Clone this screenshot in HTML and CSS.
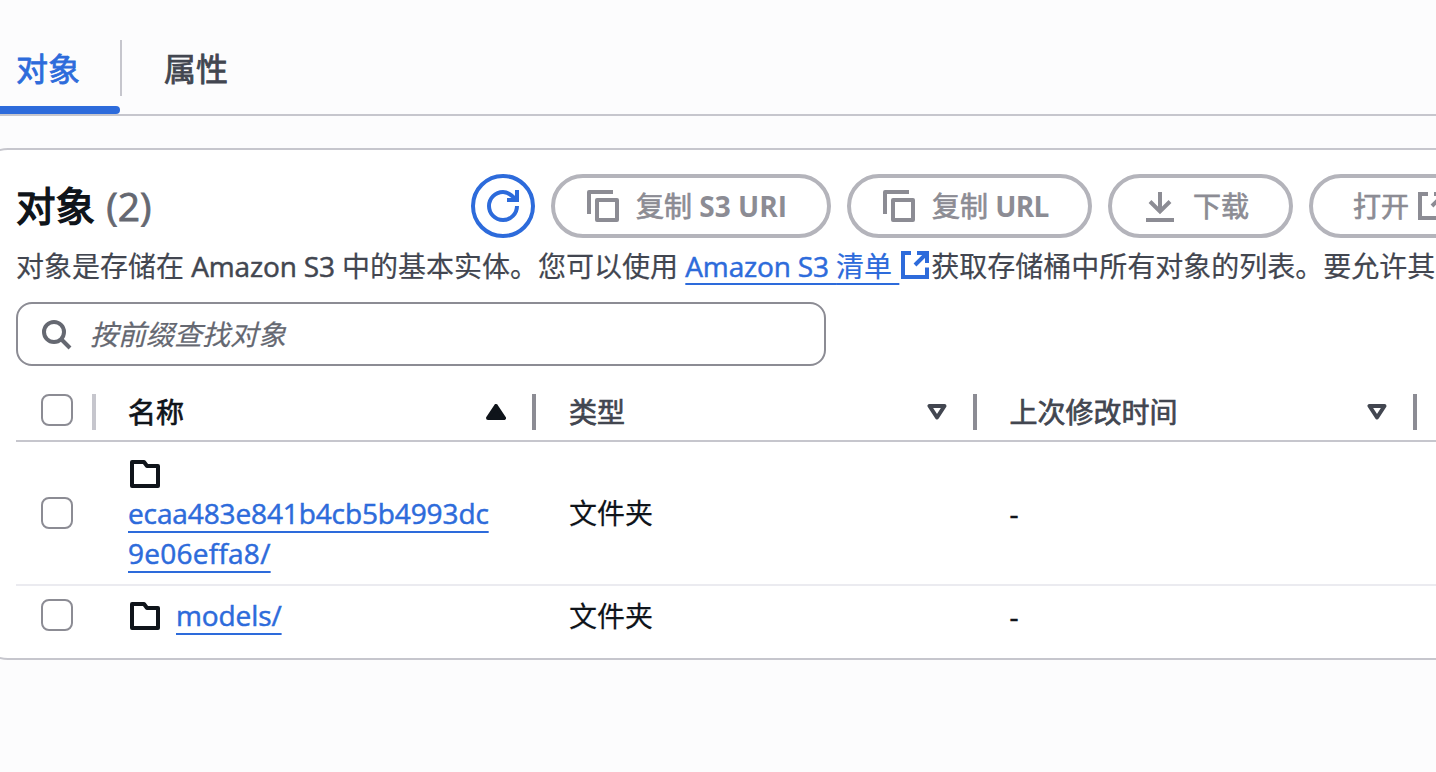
FILE: index.html
```html
<!DOCTYPE html>
<html lang="zh-CN">
<head>
<meta charset="utf-8">
<title>对象</title>
<link rel="stylesheet" href="styles.css">
</head>
<body>
<svg class="defs" width="0" height="0" aria-hidden="true">
  <symbol id="copy" viewBox="0 0 32 32"><path d="M2 24V2H26"/><rect x="10" y="10" width="20" height="20"/></symbol>
  <symbol id="refresh" viewBox="0 0 32 32"><path d="M30 16A14 14 0 1 1 16 2C21 2 24.500 4.500 28.500 9.500M20 10H30V0"/></symbol>
  <symbol id="download" viewBox="0 0 32 32"><path d="M16 2V21M6 11.500L16 21.500L26 11.500M2 30H30"/></symbol>
  <symbol id="external" viewBox="0 0 28 28"><path d="M10 2H2V26H26V16.500M16 2H26V12M26 2L14 14"/></symbol>
  <symbol id="search" viewBox="0 0 30 30"><circle cx="12" cy="12" r="10"/><path d="M19 19L28 28"/></symbol>
  <symbol id="folder" viewBox="0 0 30 28"><path d="M2 2H14L17 6H28V26H2Z"/></symbol>
  <symbol id="sort-up" viewBox="0 0 20 16"><path fill="currentColor" d="M10 2L18 14H2Z"/></symbol>
  <symbol id="sort-down" viewBox="0 0 20 16"><path d="M2.500 2H17.500L10 13.500Z"/></symbol>
</svg>

<nav class="tabs">
  <a class="tab tab-active">对象</a>
  <a class="tab">属性</a>
</nav>

<main class="panel">
  <header class="panel-header">
    <h1 class="title">对象 <span class="count">(2)</span></h1>
    <div class="actions">
      <button class="btn btn-round"><svg class="icon32"><use href="#refresh"/></svg></button>
      <button class="btn btn-off btn-uri"><svg class="icon32"><use href="#copy"/></svg><span>复制 <b>S3 URI</b></span></button>
      <button class="btn btn-off btn-url"><svg class="icon32"><use href="#copy"/></svg><span>复制 <b>URL</b></span></button>
      <button class="btn btn-off btn-download"><svg class="icon32"><use href="#download"/></svg><span>下载</span></button>
      <button class="btn btn-off btn-open"><span>打开</span><svg class="icon28"><use href="#external"/></svg></button>
    </div>
  </header>
  <p class="description">对象是存储在 <span class="latin">Amazon S3 </span>中的基本实体。您可以使用 <a class="link"><span class="latin">Amazon S3 </span>清单 </a><svg class="icon28 desc-icon"><use href="#external"/></svg>获取存储桶中所有对象的列表。要允许其</p>

  <div class="search">
    <svg class="icon30"><use href="#search"/></svg>
    <span class="placeholder">按前缀查找对象</span>
  </div>

  <section class="table">
    <div class="row head">
      <div class="cell check"><i class="box"></i></div>
      <div class="cell sorted">名称<svg class="sort"><use href="#sort-up"/></svg></div>
      <div class="cell">类型<svg class="sort"><use href="#sort-down"/></svg></div>
      <div class="cell">上次修改时间<svg class="sort"><use href="#sort-down"/></svg></div>
    </div>
    <div class="row tall">
      <div class="cell check"><i class="box"></i></div>
      <div class="cell stacked">
        <span class="folder-line"><svg class="folder"><use href="#folder"/></svg></span>
        <a class="link hash">ecaa483e841b4cb5b4993dc</a>
        <a class="link hash-end">9e06effa8/</a>
      </div>
      <div class="cell">文件夹</div>
      <div class="cell dash">-</div>
    </div>
    <div class="row short">
      <div class="cell check"><i class="box"></i></div>
      <div class="cell"><svg class="folder"><use href="#folder"/></svg><a class="link models">models/</a></div>
      <div class="cell">文件夹</div>
      <div class="cell dash">-</div>
    </div>
  </section>
</main>
</body>
</html>
```
FILE: styles.css
```css
* { box-sizing: border-box; }

body {
  margin: 0;
  width: 1436px;
  height: 772px;
  overflow: hidden;
  background: #fcfcfd;
  color: #0f141a;
  font: 28px/40px "Open Sans", "Noto Sans CJK SC", sans-serif;
  -webkit-text-stroke: 0.2px;
}

svg {
  display: block;
  flex: none;
  fill: none;
  stroke: currentColor;
  stroke-width: 4;
}
.defs { position: absolute; }
.icon32 { width: 32px; height: 32px; }
.icon30 { width: 30px; height: 30px; }
.icon28 { width: 28px; height: 28px; }
#copy, #folder, #sort-up, #sort-down { stroke-linejoin: round; }

.tabs {
  display: flex;
  height: 116px;
  padding-top: 40px;
  border-bottom: 2px solid #c6c6cd;
}
.tab {
  display: flex;
  flex-direction: column;
  justify-content: space-between;
  height: 74px;
  padding-left: 44px;
  color: #424650;
  font-size: 32px;
  line-height: 57px;
  -webkit-text-stroke: 0.8px;
}
.tab-active {
  width: 120px;
  padding-left: 16px;
  color: #2d6bdb;
}
.tab-active::after {
  content: "";
  width: 120px;
  height: 8px;
  margin-left: -16px;
  border-radius: 0 4px 4px 0;
  background: #2d6bdb;
}
.tab + .tab {
  height: 56px;
  padding-left: 42px;
  border-left: 2px solid #c6c6cd;
}

/* The left corners sit outside the viewport; the right side runs to its edge. */
.panel {
  width: 1460px;
  height: 512px;
  margin: 32px 0 0 -24px;
  padding: 24px 0 0 40px;
  border: 2px solid #c6c6cd;
  border-width: 2px 0;
  border-radius: 32px 0 0 32px;
  background: #fff;
  overflow: hidden;
}
.panel-header {
  display: flex;
  height: 64px;
}
.title {
  flex: none;
  width: 455px;
  margin: 0;
  font-size: 39.5px;
  font-weight: 400;
  line-height: 63px;
  -webkit-text-stroke: 1.4px;
}
.count {
  margin-left: 1px;
  color: #656871;
  font-size: 39px;
  -webkit-text-stroke: 0.8px;
}
.actions {
  display: flex;
  gap: 16px;
}
.btn {
  display: flex;
  flex: none;
  align-items: center;
  gap: 17px;
  height: 64px;
  padding: 0 0 0 32px;
  border: 4px solid #2d6bdb;
  border-radius: 32px;
  background: #fff;
  color: #2d6bdb;
  font: inherit;
  white-space: nowrap;
  -webkit-text-stroke: 0.7px;
}
.btn b { -webkit-text-stroke: 0; }
.btn-round { width: 64px; padding: 0 12px; }
.btn-off { border-color: #b4b4bb; color: #8c8c94; }
.btn-uri { width: 280px; }
.btn-url { width: 245px; }
.btn-url b { letter-spacing: -0.7px; }
.btn-download { width: 185px; }
.btn-open { width: 200px; padding-left: 40px; gap: 9px; }

.description {
  display: flex;
  height: 40px;
  margin: 8px 0 0;
  color: #424650;
  white-space: pre;
}
.desc-icon { margin: 5px 2px 0; color: #2d6bdb; }
.latin { letter-spacing: -0.15px; -webkit-text-stroke: 0.5px; }
.link {
  color: #2d6bdb;
  text-decoration: underline 2px;
  text-underline-offset: 6px;
  text-decoration-skip-ink: none;
}

.search {
  display: flex;
  align-items: center;
  gap: 18px;
  width: 810px;
  height: 64px;
  margin-top: 16px;
  padding-left: 24px;
  border: 2px solid #8c8c94;
  border-radius: 16px;
  color: #656871;
}
.search .icon30 { margin-top: 1px; }
.placeholder { font-style: italic; }

.table { margin-top: 16px; }
.row {
  display: grid;
  grid-template-columns: 80px 440px 440.5px 440px;
  border-bottom: 2px solid #ebebf0;
}
.cell {
  display: flex;
  align-items: center;
  padding-left: 33px;
}
.cell:nth-child(2) { padding-left: 32px; }
.check.cell { padding-left: 25px; }
.box {
  width: 32px;
  height: 32px;
  border: 2px solid #8c8c94;
  border-radius: 8px;
}
.head {
  height: 60px;
  border-color: #c6c6cd;
  color: #424650;
}
.head .cell {
  padding-top: 2px;
  -webkit-text-stroke: 0.7px;
}
.head .cell::after {
  content: "";
  width: 4px;
  height: 36px;
  margin-left: 26px;
  background: #8c8c94;
}
.head .box { margin-top: -4px; }
.head .check::after { margin-left: 19px; background: #c6c6cd; }
.head .sorted { color: #0f141a; }
.head .sort {
  width: 20px;
  height: 16px;
  margin-left: auto;
}
.tall { height: 144px; }
.short { height: 72px; border: 0; }
.short .cell { padding-bottom: 12px; }
.short .box { margin-top: -2px; }
.stacked {
  flex-direction: column;
  align-items: flex-start;
  padding-top: 11px;
}
.folder-line { height: 40px; padding-top: 7px; }
.folder { width: 30px; height: 28px; margin-left: 2px; }
.hash, .hash-end, .models { text-underline-offset: 7px; }
.hash, .hash-end, .models, .dash { -webkit-text-stroke: 0.5px; }
.hash { letter-spacing: -0.12px; }
.hash-end { letter-spacing: 0.25px; }
.models { margin: -2px 0 0 16px; letter-spacing: -0.1px; }
```
